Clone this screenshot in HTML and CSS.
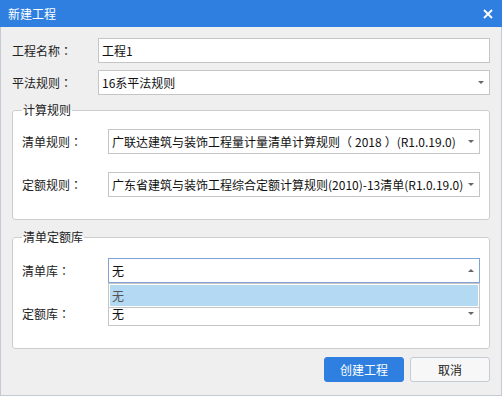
FILE: index.html
```html
<!DOCTYPE html>
<html lang="zh-CN">
<head>
    <meta charset="UTF-8">
    <title>新建工程</title>
    <link rel="stylesheet" href="styles.css">
</head>
<body>
    <div class="dialog">
        <div class="titlebar">
            <span>新建工程</span>
            <svg class="close" width="10" height="10" viewBox="0 0 10 10">
                <path d="M1 1L9 9M9 1L1 9" stroke="#fff" stroke-width="1.8"/>
            </svg>
        </div>

        <div class="content">
            <div class="form-row">
                <label>工程名称<span class="punct" lang="ja">：</span></label>
                <div class="field">工程1</div>
            </div>
            <div class="form-row">
                <label>平法规则<span class="punct" lang="ja">：</span></label>
                <div class="field combo">
                    <span>16系平法规则</span>
                    <i class="arrow"></i>
                </div>
            </div>

            <fieldset class="group calc">
                <legend>计算规则</legend>
                <div class="group-row">
                    <label>清单规则<span class="punct" lang="ja">：</span></label>
                    <div class="field combo">
                        <span>广联达建筑与装饰工程量计量清单计算规则<span class="paren-open">（</span>2018<span class="paren-close">）</span>(R1.0.19.0)</span>
                        <i class="arrow"></i>
                    </div>
                </div>
                <div class="group-row">
                    <label>定额规则<span class="punct" lang="ja">：</span></label>
                    <div class="field combo">
                        <span>广东省建筑与装饰工程综合定额计算规则(2010)-13清单(R1.0.19.0)</span>
                        <i class="arrow"></i>
                    </div>
                </div>
            </fieldset>

            <fieldset class="group lib">
                <legend>清单定额库</legend>
                <div class="group-row">
                    <label>清单库<span class="punct" lang="ja">：</span></label>
                    <div class="field combo open">
                        <span>无</span>
                        <i class="arrow up"></i>
                        <div class="dropdown">
                            <div class="option selected">无</div>
                        </div>
                    </div>
                </div>
                <div class="group-row">
                    <label>定额库<span class="punct" lang="ja">：</span></label>
                    <div class="field combo">
                        <span>无</span>
                        <i class="arrow"></i>
                    </div>
                </div>
            </fieldset>

            <div class="actions">
                <button class="btn primary">创建工程</button>
                <button class="btn">取消</button>
            </div>
        </div>
    </div>
</body>
</html>
```

FILE: styles.css
```css
* {
    box-sizing: border-box;
}

body {
    margin: 0;
    font-family: "Noto Sans CJK SC", "Liberation Sans", sans-serif;
    font-size: 12px;
    line-height: 16px;
    color: #222;
}

/* centred full-width punctuation, as the Windows UI font draws it */
.punct {
    font-family: "Noto Sans CJK JP", sans-serif;
}

.paren-open {
    margin-right: 3px;
}

.paren-close {
    margin-left: 3px;
}

.dialog {
    width: 502px;
    height: 396px;
    display: flex;
    flex-direction: column;
    background-color: #efefef;
}

.titlebar {
    height: 27px;
    flex-shrink: 0;
    background-color: #2e7fe0;
    color: #fff;
    display: flex;
    align-items: center;
    justify-content: space-between;
    padding: 0 9px 0 8px;
}

.close {
    display: block;
}

.content {
    flex: 1;
    border: 1px solid #c3cad5;
    border-top: none;
    padding: 11px 11px 0 11px;
}

.form-row {
    display: flex;
    align-items: center;
    height: 25px;
    margin-bottom: 7px;
}

.form-row label {
    width: 86px;
    flex-shrink: 0;
}

.field {
    flex: 1;
    min-width: 0;
    height: 25px;
    display: flex;
    align-items: center;
    padding: 0 3px;
    background-color: #fff;
    border: 1px solid #c5c5c5;
    color: #111;
}

.combo {
    justify-content: space-between;
    padding-right: 5px;
    position: relative;
}

.combo > span {
    white-space: nowrap;
    overflow: hidden;
}

.arrow {
    width: 0;
    height: 0;
    flex-shrink: 0;
    margin-left: 2px;
    border-left: 3px solid transparent;
    border-right: 3px solid transparent;
    border-top: 3px solid #666;
}

.arrow.up {
    border-top: none;
    border-bottom: 3px solid #666;
}

.combo.open {
    border-color: #7fa2db;
}

/* group boxes */
.group {
    margin: 9px 0 0 0;
    min-width: 0;
    border: 1px solid #cdcdcd;
    border-radius: 3px;
    background-color: #fff;
    padding: 12px 9px 22px 9px;
}

.group legend {
    padding: 0 1px;
    line-height: 16px;
    color: #222;
}

.group.calc {
    margin-top: 4px;
    padding-top: 11px;
}

.group.lib {
    padding-top: 13px;
    padding-bottom: 22px;
}

.group-row {
    display: flex;
    align-items: center;
    height: 25px;
}

.group-row + .group-row {
    margin-top: 18px;
}

.group-row label {
    width: 86px;
    flex-shrink: 0;
}

.dropdown {
    position: absolute;
    top: 24px;
    left: -1px;
    right: -1px;
    height: 25px;
    padding: 1px;
    background-color: #fff;
    border: 1px solid #c6c6c6;
    z-index: 10;
}

.option {
    height: 21px;
    display: flex;
    align-items: center;
    padding-left: 2px;
    color: #555;
}

.option.selected {
    background-color: #b3d9f3;
}

.actions {
    display: flex;
    justify-content: flex-end;
    gap: 6px;
    margin-top: 8px;
}

.btn {
    width: 80px;
    height: 25px;
    font-family: inherit;
    font-size: 12px;
    border: 1px solid #c5cbd5;
    border-radius: 3px;
    background-color: #f7f7f7;
    color: #222;
    padding: 0;
}

.btn.primary {
    background-color: #2e7fe0;
    border-color: #2e7fe0;
    color: #fff;
}
```
